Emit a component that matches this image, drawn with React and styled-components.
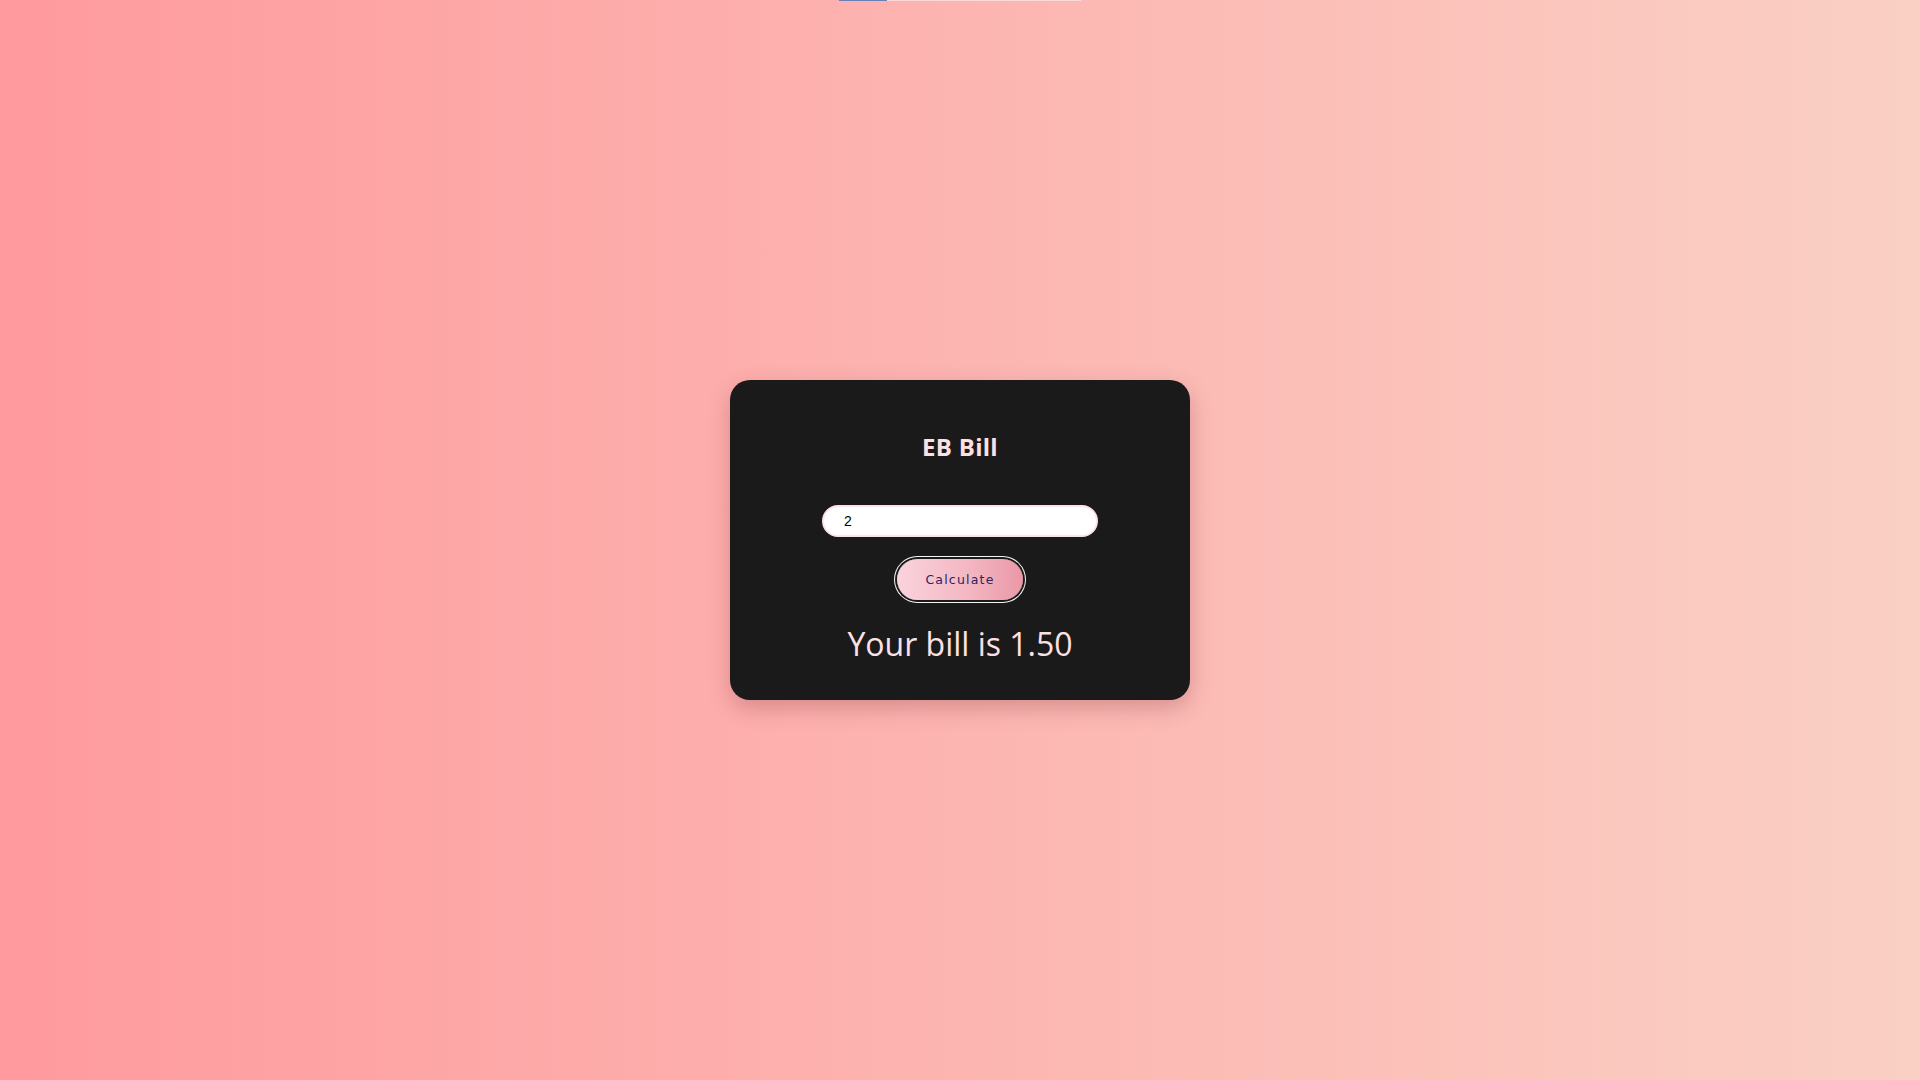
import React, { useState } from 'react';
import styled, { createGlobalStyle } from 'styled-components';

const GlobalStyle = createGlobalStyle`
  * {
    box-sizing: border-box;
  }

  html, body {
    margin: 0;
    padding: 0;
  }

  body {
    font-family: "Open Sans", "Liberation Sans", sans-serif;
    background: linear-gradient(90deg, #ff9a9e 0%, #fad0c4 100%);
    min-height: 100vh;
  }
`;

const Page = styled.div`
  height: 100vh;
  display: flex;
  flex-direction: column;
  align-items: center;
`;

const TopStrip = styled.div`
  width: 242px;
  height: 1px;
  margin-bottom: -1px;
  background: linear-gradient(90deg, #5a78b8 0 48px, #fcdcdc 48px 100%);
  opacity: 0.9;
`;

const Center = styled.main`
  flex: 1;
  width: 100%;
  display: flex;
  align-items: center;
  justify-content: center;
`;

const Card = styled.section`
  width: 460px;
  height: 320px;
  background: #1a1a1a;
  border-radius: 20px;
  box-shadow: 0 8px 22px rgba(120, 40, 50, 0.28);
  display: flex;
  flex-direction: column;
  align-items: center;
  padding-top: 55px;
`;

const Title = styled.h1`
  margin: 0;
  font-family: "Open Sans", sans-serif;
  font-weight: 700;
  font-size: 24px;
  line-height: 1;
  color: #fde0e4;
  letter-spacing: 0.3px;
`;

const Input = styled.input`
  margin-top: 46px;
  width: 276px;
  height: 32px;
  border-radius: 16px;
  border: 2px solid #fbe3e8;
  background: #ffffff;
  padding: 0 20px;
  font-family: "Liberation Sans", Arial, sans-serif;
  font-size: 14px;
  color: #000;
  outline: none;
`;

const Button = styled.button`
  margin-top: 22px;
  width: 126px;
  height: 41px;
  border: none;
  border-radius: 21px;
  background: linear-gradient(90deg, #fad3dc 0%, #f3b8c4 55%, #eb98a6 100%);
  box-shadow: 0 0 0 2px #1a1a1a, 0 0 0 3px #f5f5f5;
  font-family: "DejaVu Sans", "Liberation Sans", sans-serif;
  font-size: 12.5px;
  letter-spacing: 1.2px;
  color: #2f2463;
  cursor: pointer;
  padding: 0;
`;

const Result = styled.p`
  margin: 28px 0 0;
  font-family: "Open Sans", sans-serif;
  font-weight: 400;
  font-size: 32px;
  line-height: 1;
  color: #fde0e4;
`;

const App = () => {
  const [units, setUnits] = useState('2');
  const [bill, setBill] = useState('1.50');

  const calculate = () => {
    const u = parseFloat(units) || 0;
    setBill((u * 0.75).toFixed(2));
  };

  return (
    <>
      <GlobalStyle />
      <Page>
        <TopStrip />
        <Center>
          <Card>
            <Title>EB Bill</Title>
            <Input
              type="text"
              value={units}
              onChange={(e) => setUnits(e.target.value)}
            />
            <Button onClick={calculate}>Calculate</Button>
            <Result>Your bill is {bill}</Result>
          </Card>
        </Center>
      </Page>
    </>
  );
};

export default App;
